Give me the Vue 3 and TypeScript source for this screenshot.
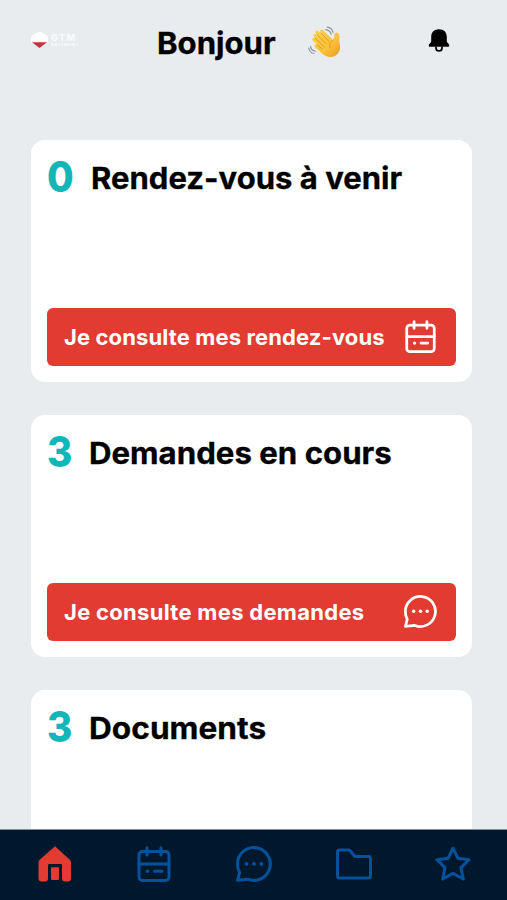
<script setup lang="ts">
interface Card {
  key: string
  count: number
  title: string
  action?: string
  icon?: 'calendar' | 'chat'
}

const cards: Card[] = [
  { key: 'appointments', count: 0, title: 'Rendez-vous à venir', action: 'Je consulte mes rendez-vous', icon: 'calendar' },
  { key: 'requests', count: 3, title: 'Demandes en cours', action: 'Je consulte mes demandes', icon: 'chat' },
  { key: 'documents', count: 3, title: 'Documents' },
]

const tabs: string[] = ['home', 'calendar', 'chat', 'folder', 'star']
</script>

<template>
  <div class="screen">
    <svg class="sprite" width="0" height="0" aria-hidden="true">
      <symbol id="home" viewBox="0 0 36 36">
        <path d="M18 0.3 32.8 13.8Q34 15 34 16.7V32.5Q34 35.5 31 35.5H28Q25 35.5 25 32.5V19Q25 18 24 18H12Q11 18 11 19V32.5Q11 35.5 8 35.5H4.5Q1.5 35.5 1.5 32.5V16.7Q1.5 15 2.7 13.8ZM14 21.3H22V32.8Q22 34 20.8 34H15.2Q14 34 14 32.8Z" fill="currentColor" />
      </symbol>
      <symbol id="calendar" viewBox="0 0 36 36">
        <g fill="none" stroke="currentColor" stroke-width="3" stroke-linecap="round" stroke-linejoin="round">
          <rect x="3" y="5.5" width="30" height="29" rx="3.5" />
          <path d="M3 18H33M11 1.7V9M25 1.7V9M18.5 25.2H26" />
        </g>
        <circle cx="11.5" cy="25.2" r="1.8" fill="currentColor" />
      </symbol>
      <symbol id="chat" viewBox="0 0 36 36">
        <path d="M1.6 34.3 3.6 26.4C1.9 23.9 1.5 21 1.5 18A16.4 16.4 0 1 1 11.8 33.2Z" fill="none" stroke="currentColor" stroke-width="3" stroke-linejoin="round" />
        <g fill="currentColor">
          <circle cx="10.5" cy="17.8" r="1.9" /><circle cx="18" cy="17.8" r="1.9" /><circle cx="25.3" cy="17.8" r="1.9" />
        </g>
      </symbol>
      <symbol id="folder" viewBox="0 0 36 36">
        <path d="M1.5 6Q1.5 4 3.5 4H12.3Q13.3 4 14 4.8L19 10.5H32.5Q34.5 10.5 34.5 12.5V30Q34.5 32 32.5 32H3.5Q1.5 32 1.5 30Z" fill="none" stroke="currentColor" stroke-width="3" stroke-linejoin="round" />
      </symbol>
      <symbol id="star" viewBox="0 0 36 36">
        <path d="M18 2.2 22.8 12.2 34 13.8 26 21.6 28.3 33 18 27.4 7.7 33 10 21.6 2 13.8 13.2 12.2Z" fill="none" stroke="currentColor" stroke-width="3" stroke-linejoin="round" />
      </symbol>
    </svg>

    <header class="header">
      <div class="brand">
        <svg class="emblem" viewBox="0 0 18 18">
          <path d="M9 0 16 3.5 18 6V12H0V6L2 3.5Z" fill="#fff" />
          <path d="M1 11.5H17L9 17.5Z" fill="#c63242" />
        </svg>
        <div class="brand-text">
          <span class="brand-name">GTM</span>
          <span class="brand-sub">BATIMENT</span>
        </div>
      </div>
      <h1 class="hello">Bonjour</h1>
      <svg class="wave" viewBox="0 0 34 34">
        <defs>
          <linearGradient id="skin" x1="0" y1="0" x2="1" y2="1">
            <stop offset="0" stop-color="#ffd34c" />
            <stop offset=".6" stop-color="#fcc139" />
            <stop offset="1" stop-color="#e59d21" />
          </linearGradient>
        </defs>
        <path d="M12.4 12.6 7.9 7.8C6 5.6 8.8 3.2 10.7 5.2L17 11.6 12.5 6C11.4 4.4 13.5 2.5 15 4L25 14C26.2 13 26.4 10.8 26.3 8.8 26.2 6.1 30 5.4 31 8.2 32 11.2 30.8 14 31.7 17.4 33 22.3 31.4 26.4 28.3 28.9 24.2 32 18.8 31.5 14.6 28L7.3 21.5C5.1 19.5 7.4 17.2 9.4 18.7L5.3 15.1C3 12.8 5.2 10.7 7.4 12.4L5.8 10.7C4.4 8.7 6.5 7 8.2 8.4Z" fill="url(#skin)" />
        <path d="M9.3 8.9 18.1 17.8M12.7 6.8 21 15.5M7.2 12.2 16.2 20.8M9.3 18.7 14.1 22.8M25 14.2C21.8 16 21.2 19.2 22.1 21.8" fill="none" stroke="#dc941e" stroke-width=".9" stroke-linecap="round" />
        <path d="M17.7 3.6C20.4 4 22.4 5.6 23.2 8.2M19.2 1.2C22.4 1.6 24.4 3.6 25 6.4M2.6 20.4C2.9 22.8 4.8 24.8 7.4 25.2M.8 22C1.2 25 3 27 6 27.5" fill="none" stroke="#8d969b" stroke-width="1.2" stroke-linecap="round" />
      </svg>
      <svg class="bell" viewBox="0 0 22 24">
        <path d="M11 .3C15.9.3 18.8 3.4 18.8 7.9V12.8L21 15.4Q21.9 17.8 19.8 17.8H2.2Q.1 17.8 1 15.4L3.2 12.8V7.9C3.2 3.4 6.1.3 11 .3Z" fill="#000" />
        <path d="M8 17.5V19A3 3 0 0 0 14 19V17.5" fill="none" stroke="#000" stroke-width="1.7" />
      </svg>
    </header>

    <main class="cards">
      <section v-for="card in cards" :key="card.key" class="card" :class="card.key">
        <div class="heading">
          <span class="count">{{ card.count }}</span>
          <h2 class="title">{{ card.title }}</h2>
        </div>
        <button v-if="card.action" class="action" type="button">
          <span class="label">{{ card.action }}</span>
          <svg class="action-icon"><use :href="`#${card.icon}`" /></svg>
        </button>
      </section>
    </main>

    <nav class="tabs">
      <a v-for="tab in tabs" :key="tab" class="tab" :class="{ active: tab === 'home' }">
        <svg class="tab-icon"><use :href="`#${tab}`" /></svg>
      </a>
    </nav>
  </div>
</template>

<style>
body {
  background: #e8ecef;
}
</style>

<style scoped>
.screen {
  display: flex;
  flex-direction: column;
  height: 900px;
  overflow: hidden;
  background: #e8ecef;
  font-family: Inter, "Liberation Sans", sans-serif;
  color: #000;
}

.sprite {
  position: absolute;
}

.header {
  display: flex;
  flex: none;
  align-items: center;
  box-sizing: border-box;
  height: 86px;
  padding-left: 31px;
}

.brand {
  display: flex;
  gap: 3px;
  width: 126px;
  margin-bottom: 6px;
}

.emblem {
  width: 17px;
  height: 18px;
}

.brand-text {
  display: flex;
  flex-direction: column;
  justify-content: center;
  color: #f9fafb;
  font-weight: 800;
}

.brand-name {
  font-size: 9px;
  line-height: 8px;
  letter-spacing: 1.5px;
}

.brand-sub {
  font-size: 4px;
  line-height: 5px;
  letter-spacing: .9px;
}

.hello {
  width: 151px;
  margin: 0;
  font-size: 30px;
  font-weight: 700;
  line-height: 40px;
  -webkit-text-stroke: .3px #000;
  transform: scaleX(1.037);
  transform-origin: left;
}

.wave {
  width: 34px;
  height: 34px;
}

.bell {
  width: 22px;
  height: 24px;
  margin: 0 0 4px 86px;
}

.cards {
  display: flex;
  flex: 1;
  flex-direction: column;
  gap: 33px;
  min-height: 0;
  overflow: hidden;
  padding: 54px 35px 0 31px;
}

.card {
  display: flex;
  flex: none;
  flex-direction: column;
  justify-content: space-between;
  box-sizing: border-box;
  height: 242px;
  padding: 13px 16px 16px;
  border-radius: 14px;
  background: #fff;
}

.heading {
  display: flex;
  align-items: center;
  height: 50px;
}

.count {
  width: 42px;
  margin-bottom: 2px;
  color: #12b5b8;
  font-size: 42px;
  font-weight: 800;
  line-height: 48px;
  transform: scaleX(.92);
  transform-origin: left;
}

.title {
  margin: 0;
  font-size: 30px;
  font-weight: 700;
  line-height: 50px;
  white-space: nowrap;
  -webkit-text-stroke: .3px #000;
  transform: scaleX(1.04);
  transform-origin: left;
}

.appointments .count {
  width: 44px;
}

.appointments .title {
  transform: scaleX(1.035);
}

.documents .title {
  transform: scaleX(1.055);
}

.action {
  display: flex;
  align-items: center;
  justify-content: space-between;
  height: 58px;
  padding: 0 19px 0 17px;
  border: 0;
  border-radius: 6px;
  background: #e13b32;
  color: #fff;
  font-family: inherit;
}

.label {
  font-size: 22px;
  font-weight: 700;
  letter-spacing: .12px;
  white-space: nowrap;
}

.requests .label {
  letter-spacing: .3px;
}

.action-icon {
  width: 33px;
  height: 33px;
  margin-bottom: 1px;
}

.tabs {
  display: flex;
  flex: none;
  box-sizing: border-box;
  height: 71px;
  padding: 0 4px 2px 5px;
  border-top: 1px solid #83909a;
  background: #00182e;
}

.tab {
  display: flex;
  flex: 1;
  align-items: center;
  justify-content: center;
  color: #05529c;
}

.tab.active {
  color: #e13b32;
}

.tab-icon {
  width: 36px;
  height: 36px;
}
</style>
